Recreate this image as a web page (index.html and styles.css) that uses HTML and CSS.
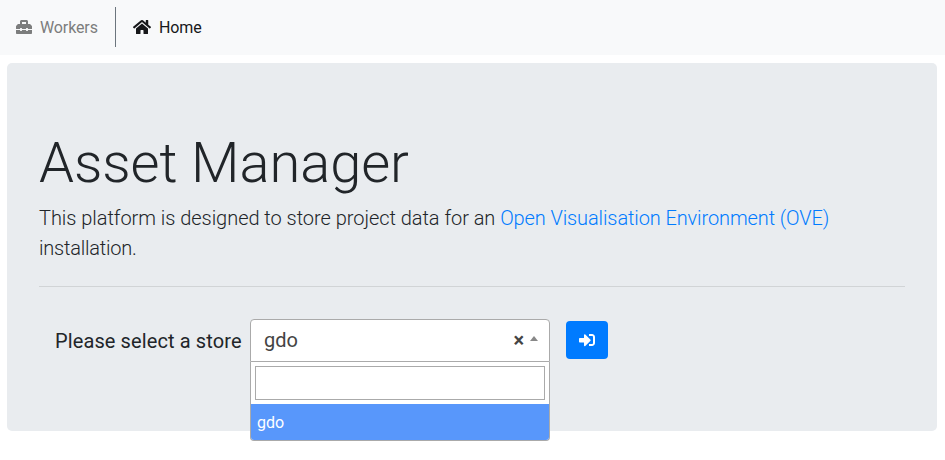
FILE: index.html
```html
<!DOCTYPE html>
<html lang="en">
<head>
<meta charset="utf-8">
<title>Asset Manager</title>
<link rel="stylesheet" href="styles.css">
</head>
<body>
<nav class="navbar">
  <a class="nav-link nav-workers"><svg class="icon" viewBox="0 0 512 512"><path d="M502.63 214.63l-45.25-45.25c-6-6-14.14-9.37-22.63-9.37H384V80c0-26.51-21.49-48-48-48H176c-26.51 0-48 21.49-48 48v80H77.25c-8.49 0-16.62 3.37-22.63 9.37L9.37 214.63c-6 6-9.37 14.14-9.37 22.63V320h128v-16c0-8.84 7.16-16 16-16h32c8.84 0 16 7.16 16 16v16h128v-16c0-8.84 7.16-16 16-16h32c8.84 0 16 7.16 16 16v16h128v-82.75c0-8.48-3.37-16.62-9.37-22.62zM320 160H192V96h128v64zm64 208c0 8.84-7.16 16-16 16h-32c-8.84 0-16-7.16-16-16v-16H192v16c0 8.84-7.16 16-16 16h-32c-8.84 0-16-7.16-16-16v-16H0v96c0 17.67 14.33 32 32 32h448c17.67 0 32-14.33 32-32v-96H384v16z"/></svg><span class="nav-text">Workers</span></a>
  <a class="nav-link nav-home"><svg class="icon icon-wide" viewBox="0 0 576 512"><path d="M280.37 148.26L96 300.11V464a16 16 0 0 0 16 16l112.06-.29a16 16 0 0 0 15.92-16V368a16 16 0 0 1 16-16h64a16 16 0 0 1 16 16v95.64a16 16 0 0 0 16 16.05L464 480a16 16 0 0 0 16-16V300L295.67 148.26a12.19 12.19 0 0 0-15.3 0zM571.6 251.47L488 182.56V44.05a12 12 0 0 0-12-12h-56a12 12 0 0 0-12 12v72.61L318.47 43a48 48 0 0 0-61 0L4.34 251.47a12 12 0 0 0-1.6 16.9l25.5 31A12 12 0 0 0 45.15 301l235.22-193.74a12.19 12.19 0 0 1 15.3 0L530.9 301a12 12 0 0 0 16.9-1.6l25.5-31a12 12 0 0 0-1.7-16.93z"/></svg><span class="nav-text">Home</span></a>
</nav>
<main class="jumbotron">
  <h1 class="title">Asset Manager</h1>
  <p class="lead">This platform is designed to store project data for an <a class="link">Open Visualisation Environment (OVE)</a> <span class="lead-end">installation.</span></p>
  <hr class="rule">
  <form class="store-form">
    <label class="label">Please select a store</label>
    <div class="select">
      <div class="selection">
        <span class="value">gdo</span>
        <span class="clear">×</span>
        <span class="arrow"></span>
      </div>
      <div class="dropdown">
        <input class="search" type="text" aria-label="Search">
        <div class="option">gdo</div>
      </div>
    </div>
    <button class="submit" type="button" aria-label="Open store"><svg class="icon" viewBox="0 0 512 512"><path d="M416 448h-84c-6.600 0-12-5.400-12-12v-40c0-6.600 5.400-12 12-12h84c17.700 0 32-14.300 32-32V160c0-17.700-14.300-32-32-32h-84c-6.600 0-12-5.400-12-12V76c0-6.600 5.400-12 12-12h84c53 0 96 43 96 96v192c0 53-43 96-96 96zm-47-201L201 79c-15-15-41-4.500-41 17v96H24c-13.300 0-24 10.700-24 24v96c0 13.300 10.700 24 24 24h136v96c0 21.500 26 32 41 17l168-168c9.300-9.400 9.300-24.600 0-34z"/></svg></button>
  </form>
</main>
</body>
</html>
```
FILE: styles.css
```css
* { box-sizing: border-box; }

body {
  margin: 0;
  min-height: 460px;
  background: #fff;
  color: #212529;
  font: 400 16px/1.5 Roboto, "Liberation Sans", sans-serif;
}

.icon {
  width: 16px;
  height: 16px;
  fill: currentColor;
  flex: none;
}

.icon-wide { width: 18px; }

.navbar {
  display: flex;
  height: 55px;
  padding: 7px 16px 8px;
  background: #f8f9fa;
}

.nav-link {
  display: flex;
  align-items: center;
  gap: 8px;
}

.nav-text {
  padding-top: 2px;
  letter-spacing: -.12px;
}

.nav-workers {
  width: 100px;
  color: #7c7d7d;
  border-right: 1px solid #6c757d;
}

.nav-home {
  padding-left: 17px;
  color: #17181a;
}

.jumbotron {
  height: 368px;
  margin: 8px 8px 0 7px;
  padding: 64px 32px;
  background: #e9ecef;
  border-radius: 5px;
}

.title {
  margin: 0;
  padding-top: 3px;
  font-size: 56px;
  font-weight: 300;
  line-height: 67px;
  letter-spacing: -.05px;
}

.lead {
  margin: 6px 0 0;
  font-size: 20px;
  font-weight: 300;
  line-height: 30px;
  letter-spacing: -.04px;
}

.link {
  color: #007bff;
  letter-spacing: -.11px;
}

.lead-end { letter-spacing: -.22px; }

.rule {
  margin: 23px 0 32px;
  border: 0;
  border-top: 1px solid rgba(0, 0, 0, .1);
}

.store-form {
  display: flex;
  align-items: flex-start;
  padding-left: 16px;
}

.label {
  width: 195px;
  font-size: 20px;
  line-height: 45px;
  letter-spacing: .11px;
}

.select {
  position: relative;
  width: 300px;
}

.selection {
  display: flex;
  align-items: center;
  height: 43px;
  padding: 0 11px 0 13px;
  background: #fff;
  border: 1px solid #aaa;
  border-radius: 4px 4px 0 0;
  color: #444;
}

.value {
  flex: 1;
  padding-bottom: 2px;
  font-size: 20px;
}

.clear {
  margin-right: 6px;
  padding-bottom: 2px;
  font-size: 20px;
  font-weight: 700;
}

.arrow {
  margin-bottom: 4px;
  border: 4px solid transparent;
  border-top: 0;
  border-bottom: 5px solid #888;
}

.dropdown {
  position: absolute;
  top: 43px;
  left: 0;
  width: 100%;
  background: #fff;
  border: 1px solid #aaa;
  border-top: 0;
  border-radius: 0 0 4px 4px;
  overflow: hidden;
}

.search {
  display: block;
  width: 290px;
  height: 34px;
  margin: 4px;
  padding: 4px;
  border: 1px solid #aaa;
  font: inherit;
}

.option {
  height: 36px;
  padding: 7px 6px 5px;
  background: #5897fb;
  color: #fff;
}

.submit {
  display: flex;
  align-items: center;
  justify-content: center;
  width: 42px;
  height: 38px;
  margin: 2px 0 0 16px;
  padding: 0;
  background: #007bff;
  border: 0;
  border-radius: 4px;
  color: #fff;
}
```
